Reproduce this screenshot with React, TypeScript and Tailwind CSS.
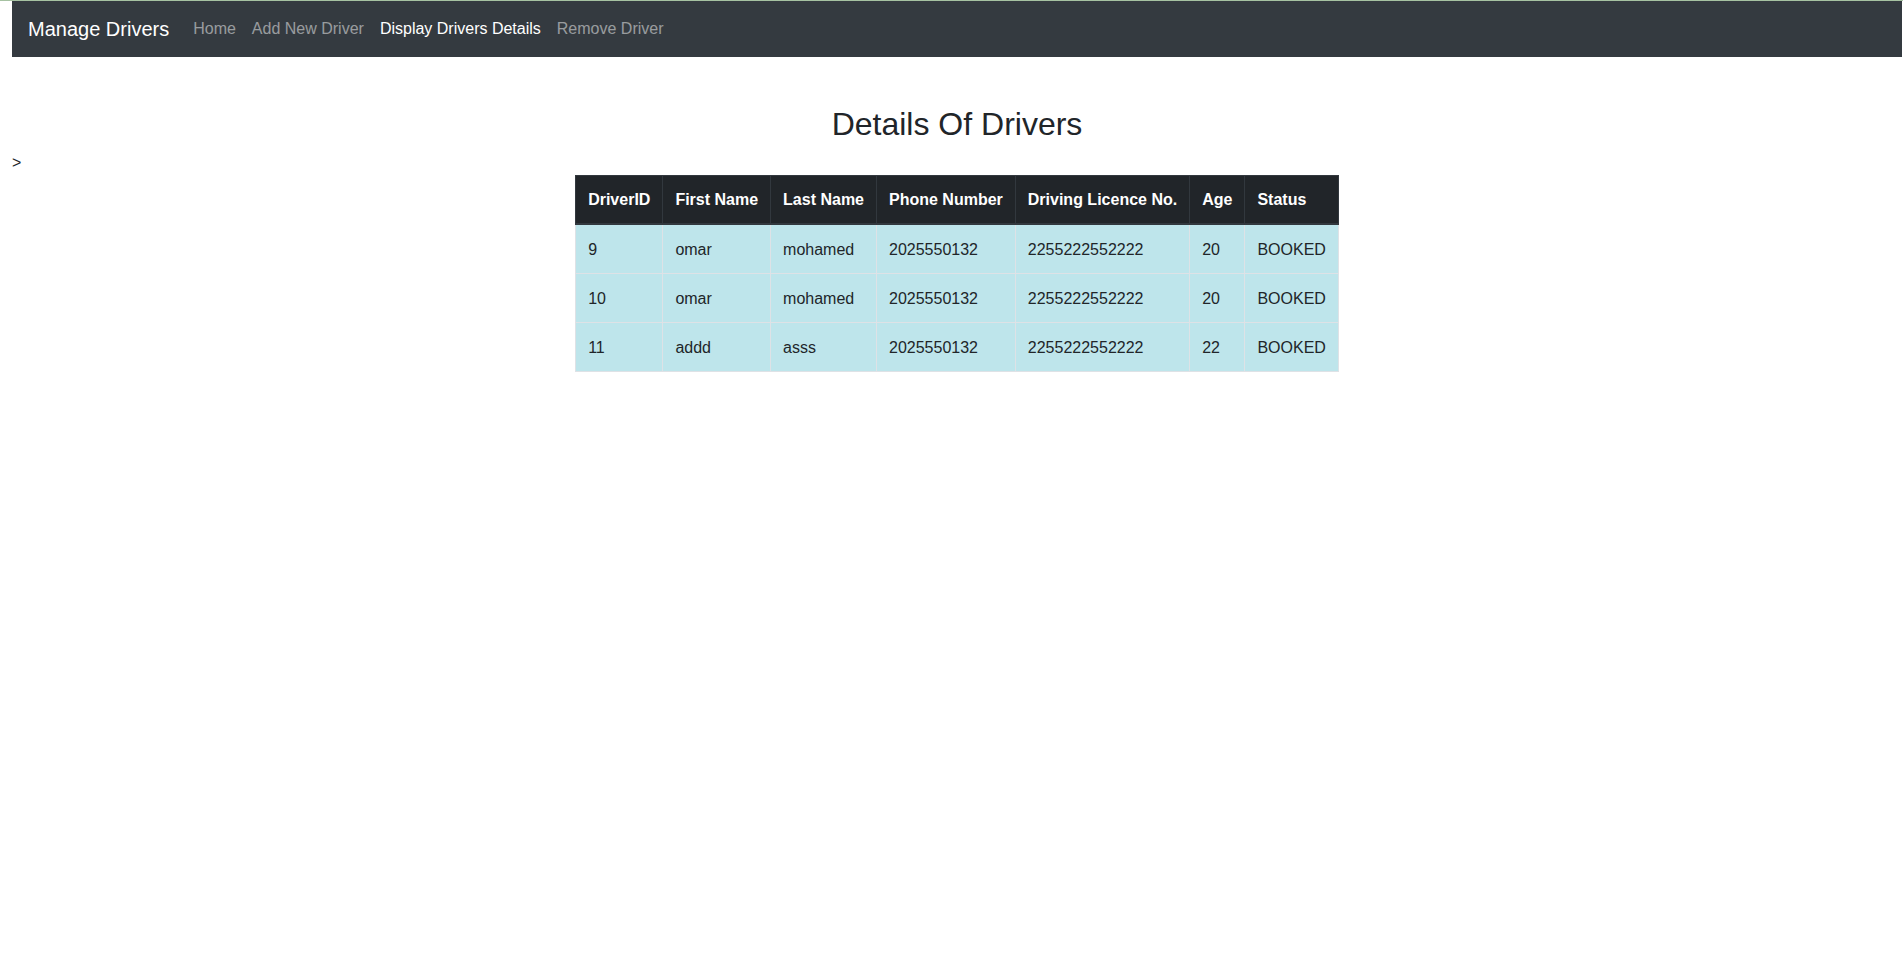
import React from 'react'

interface Driver {
  id: number
  firstName: string
  lastName: string
  phone: string
  licence: string
  age: number
  status: string
}

const drivers: Driver[] = [
  { id: 9, firstName: 'omar', lastName: 'mohamed', phone: '2025550132', licence: '2255222552222', age: 20, status: 'BOOKED' },
  { id: 10, firstName: 'omar', lastName: 'mohamed', phone: '2025550132', licence: '2255222552222', age: 20, status: 'BOOKED' },
  { id: 11, firstName: 'addd', lastName: 'asss', phone: '2025550132', licence: '2255222552222', age: 22, status: 'BOOKED' },
]

const headers = ['DriverID', 'First Name', 'Last Name', 'Phone Number', 'Driving Licence No.', 'Age', 'Status']

const links = [
  { label: 'Home', active: false },
  { label: 'Add New Driver', active: false },
  { label: 'Display Drivers Details', active: true },
  { label: 'Remove Driver', active: false },
]

export default function App() {
  const cell = 'border border-[#dee2e6] px-3 pt-[13px] pb-[11px]'

  return (
    <div className="min-h-screen bg-white text-[#212529] text-base leading-6 font-['Liberation_Sans',Arial,sans-serif]">
      {/* bande verte en haut */}
      <div className="h-px bg-[#a6c2a2]" />

      <div className="pl-[12px] pr-px">
        {/* Navbar */}
        <nav className="flex h-[56px] items-center bg-[#343a40] px-4">
          <span className="mr-4 text-[20px] leading-[30px] text-white">Manage Drivers</span>
          <div className="flex">
            {links.map((l) => (
              <a
                key={l.label}
                href="#"
                className={
                  'px-2 py-2 ' + (l.active ? 'text-white' : 'text-[rgba(255,255,255,0.5)]')
                }
              >
                {l.label}
              </a>
            ))}
          </div>
        </nav>

        {/* Contenu */}
        <div className="pt-[48px]">
          <h2 className="mb-2 text-center text-[32px] font-medium leading-[38px]">Details Of Drivers</h2>
          <div className="leading-[24px]">&gt;</div>
          <div className="flex justify-center">
            <table className="border-collapse border border-[#dee2e6]">
              <thead>
                <tr className="bg-[#212529] text-white">
                  {headers.map((h) => (
                    <th key={h} className="border border-b-2 border-[#32383e] px-3 pt-3 pb-[11px] text-left font-bold">
                      {h}
                    </th>
                  ))}
                </tr>
              </thead>
              <tbody>
                {drivers.map((d) => (
                  <tr key={d.id} className="bg-[#bee5eb]">
                    <td className={cell}>{d.id}</td>
                    <td className={cell}>{d.firstName}</td>
                    <td className={cell}>{d.lastName}</td>
                    <td className={cell}>{d.phone}</td>
                    <td className={cell}>{d.licence}</td>
                    <td className={cell}>{d.age}</td>
                    <td className={cell}>{d.status}</td>
                  </tr>
                ))}
              </tbody>
            </table>
          </div>
        </div>
      </div>
    </div>
  )
}
